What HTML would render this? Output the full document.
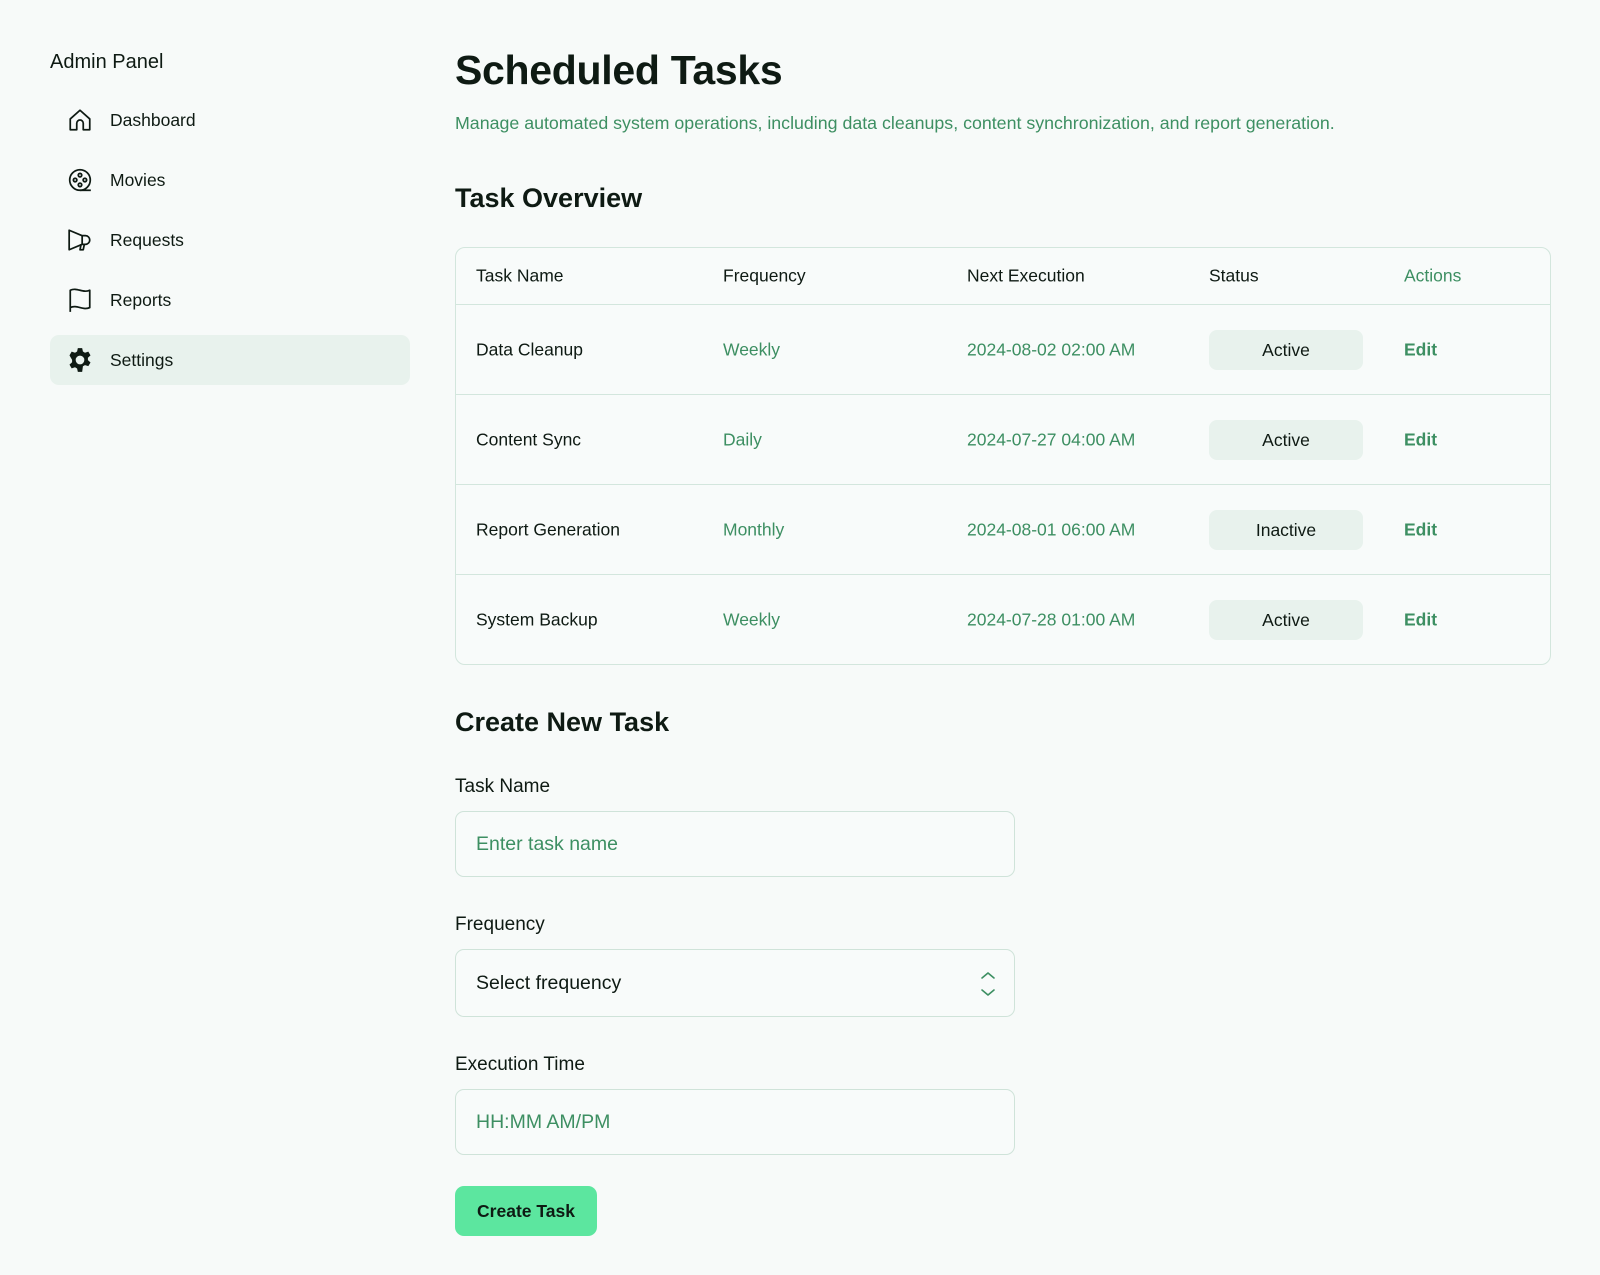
<!DOCTYPE html>
<html><head><meta charset="utf-8"><style>
*{box-sizing:border-box;margin:0;padding:0}
body{width:1600px;height:1275px;background:#f7faf9;font-family:"Liberation Sans",sans-serif;color:#0e1a13;position:relative;overflow:hidden}
.abs{position:absolute}
.brand{left:50px;top:51px;font-size:20px}
.nav{left:50px;width:360px;height:50px;display:flex;align-items:center;padding-left:17px;font-size:17.5px;border-radius:9px}
.nav svg{width:26px;height:26px;margin-right:17px}
.nav.sel{background:#e8f2ed}
h1{position:absolute;left:455px;top:47px;font-size:41px;font-weight:bold;letter-spacing:-0.3px}
.sub{left:455px;top:113px;font-size:17.8px;color:#3d8f62}
h2{position:absolute;left:455px;font-size:27px;font-weight:bold}
.table{left:455px;top:247px;width:1096px;height:418px;border:1px solid #d3e6dd;border-radius:10px;background:#f8fbfa}
.row{position:absolute;left:0;width:100%;border-top:1px solid #d3e6dd;font-size:17.5px}
.row span{position:absolute;top:50%;transform:translateY(-50%)}
.g{color:#3d8f62}
.badge{width:154px;height:40px;background:#e8f2ed;border-radius:8px;text-align:center;line-height:40px}
.edit{font-weight:bold;color:#3d8f62}
.label{left:455px;font-size:19px}
.input{left:455px;width:560px;border:1px solid #cfe3d9;border-radius:9px;background:#f8fbfa;font-size:19.5px;padding-left:20px;display:flex;align-items:center;color:#3d8f62}
.btn{left:455px;top:1186px;width:142px;height:50px;background:#5ce69f;border-radius:9px;font-weight:bold;font-size:17.5px;text-align:center;line-height:50px}
</style></head><body>
<div class="abs brand">Admin Panel</div>
<div class="abs nav" style="top:95px"><svg viewBox="0 0 24 24" fill="none" stroke="#0e1a13" stroke-width="1.6" stroke-linejoin="round"><path d="M3 11L12 3l9 8v10h-6v-6a3 3 0 0 0-6 0v6H3z"/></svg>Dashboard</div>
<div class="abs nav" style="top:155px"><svg viewBox="0 0 24 24" fill="none" stroke="#0e1a13" stroke-width="1.6"><circle cx="12" cy="12" r="9.5"/><circle cx="12" cy="7.5" r="1.6"/><circle cx="7.5" cy="12" r="1.6"/><circle cx="16.5" cy="12" r="1.6"/><circle cx="12" cy="16.5" r="1.6"/><path d="M12 21.5h10"/></svg>Movies</div>
<div class="abs nav" style="top:215px"><svg viewBox="0 0 24 24" fill="none" stroke="#0e1a13" stroke-width="1.6" stroke-linejoin="round"><path d="M2 3v18l12-5h3a4 4 0 0 0 0-8h-3z"/><path d="M14 8v8M13 16l-1 5h3l1-5"/></svg>Requests</div>
<div class="abs nav" style="top:275px"><svg viewBox="0 0 24 24" fill="none" stroke="#0e1a13" stroke-width="1.6" stroke-linejoin="round"><path d="M3 23V3c6-3 12 3 18 0v16c-6 3-12-3-18 0"/></svg>Reports</div>
<div class="abs nav sel" style="top:335px"><svg viewBox="0 0 24 24"><path fill="#0e1a13" fill-rule="evenodd" d="M10 1h4l.7 3.2 1.9 1.1 3.1-1 2 3.4-2.4 2.2v2.2l2.4 2.2-2 3.4-3.1-1-1.9 1.1L14 23h-4l-.7-3.2-1.9-1.1-3.1 1-2-3.4 2.4-2.2v-2.2L2.3 7.7l2-3.4 3.1 1 1.9-1.1zM12 8a4 4 0 1 0 0 8 4 4 0 0 0 0-8z"/></svg>Settings</div>

<h1>Scheduled Tasks</h1>
<div class="abs sub">Manage automated system operations, including data cleanups, content synchronization, and report generation.</div>
<h2 style="top:183px">Task Overview</h2>
<div class="abs table">
 <div class="row" style="top:0;height:56px;border-top:none"><span style="left:20px">Task Name</span><span style="left:267px">Frequency</span><span style="left:511px">Next Execution</span><span style="left:753px">Status</span><span class="g" style="left:948px">Actions</span></div>
 <div class="row" style="top:56px;height:90px"><span style="left:20px">Data Cleanup</span><span class="g" style="left:267px">Weekly</span><span class="g" style="left:511px">2024-08-02 02:00 AM</span><span class="badge" style="left:753px">Active</span><span class="edit" style="left:948px">Edit</span></div>
 <div class="row" style="top:146px;height:90px"><span style="left:20px">Content Sync</span><span class="g" style="left:267px">Daily</span><span class="g" style="left:511px">2024-07-27 04:00 AM</span><span class="badge" style="left:753px">Active</span><span class="edit" style="left:948px">Edit</span></div>
 <div class="row" style="top:236px;height:90px"><span style="left:20px">Report Generation</span><span class="g" style="left:267px">Monthly</span><span class="g" style="left:511px">2024-08-01 06:00 AM</span><span class="badge" style="left:753px">Inactive</span><span class="edit" style="left:948px">Edit</span></div>
 <div class="row" style="top:326px;height:90px"><span style="left:20px">System Backup</span><span class="g" style="left:267px">Weekly</span><span class="g" style="left:511px">2024-07-28 01:00 AM</span><span class="badge" style="left:753px">Active</span><span class="edit" style="left:948px">Edit</span></div>
</div>
<h2 style="top:707px">Create New Task</h2>
<div class="abs label" style="top:776px">Task Name</div>
<div class="abs input" style="top:811px;height:66px">Enter task name</div>
<div class="abs label" style="top:914px">Frequency</div>
<div class="abs input" style="top:949px;height:68px;color:#0e1a13">Select frequency
 <svg style="position:absolute;right:18px;top:20px" width="16" height="28" viewBox="0 0 16 28" fill="none" stroke="#3d8f62" stroke-width="1.6" stroke-linecap="round" stroke-linejoin="round"><path d="M2 8l6-5 6 5M2 20l6 5 6-5"/></svg></div>
<div class="abs label" style="top:1054px">Execution Time</div>
<div class="abs input" style="top:1089px;height:66px">HH:MM AM/PM</div>
<div class="abs btn">Create Task</div>
</body></html>
